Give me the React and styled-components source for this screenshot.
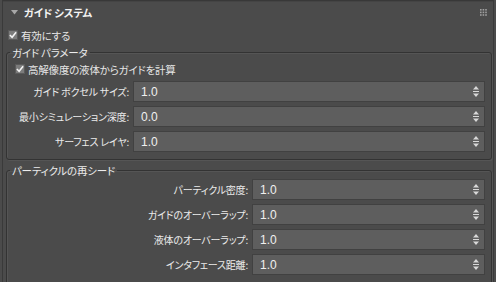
import React from "react";
import { styled, createGlobalStyle } from "styled-components";

const GlobalStyle = createGlobalStyle`
  html, body {
    margin: 0;
    padding: 0;
    background: #4b4b4b;
    overflow: hidden;
  }
  body {
    font-family: "Noto Sans CJK JP", "Liberation Sans", sans-serif;
    font-size: 10px;
    letter-spacing: -0.2px;
    color: #e6e6e6;
  }
`;

const StRollout = styled.div`
  width: 492px;
  height: 282px;
  margin-left: 2px;
  border-left: 1px solid #3a3a3a;
  border-right: 1px solid #3a3a3a;
  border-top: 1px solid #383838;
  box-sizing: border-box;
  overflow: hidden;
  font-feature-settings: "palt";
`;

const StHeader = styled.div`
  height: 21px;
  display: flex;
  align-items: center;
  padding-left: 8px;
  padding-right: 6px;
  border-top: 1px solid #444;
`;

const StTitle = styled.span`
  font-weight: bold;
  font-size: 10.5px;
  color: #f2f2f2;
  margin-left: 6px;
  flex: 1;
`;

const StCheckRow = styled.label`
  display: flex;
  align-items: center;
  gap: 3px;
  height: 14px;
  font-size: 10.5px;
  padding-left: ${(p) => p.$indent}px;
  margin: ${(p) => p.$margin};
`;

const StBox = styled.span`
  width: 10px;
  height: 10px;
  background: #7c7c7c;
  border: 1px solid #5a5a5a;
  box-sizing: border-box;
  display: flex;
  align-items: center;
  justify-content: center;
`;

const StGroup = styled.fieldset`
  margin: ${(p) => p.$margin};
  margin-left: 3px;
  margin-right: 0;
  width: 486px;
  box-sizing: border-box;
  padding: 0 6px ${(p) => p.$bottom}px 0;
  border: 1px solid #333;
  border-radius: 3px;
  box-shadow: inset 1px 1px 0 #555, 1px 1px 0 #555;
  min-width: 0;
`;

const StLegend = styled.legend`
  padding: 0 2px;
  margin-left: 3px;
  line-height: 13px;
  font-size: 10.5px;
  color: #ececec;
`;

const StRows = styled.div`
  display: grid;
  grid-template-columns: ${(p) => p.$labelWidth}px 1fr;
  column-gap: 4px;
  row-gap: 4px;
  margin-top: ${(p) => p.$top}px;
`;

const StLabel = styled.span`
  text-align: right;
  align-self: center;
  white-space: nowrap;
  color: #ececec;
`;

const StField = styled.div`
  height: 21px;
  box-sizing: border-box;
  background: #5e5e5e;
  border: 1px solid #414141;
  display: flex;
  align-items: center;
  padding: 0 5px 0 7px;
  font-family: "Liberation Sans", sans-serif;
  font-size: 12px;
  letter-spacing: 0;
  color: #f0f0f0;
`;

const StValue = styled.span`
  flex: 1;
`;

const Triangle = () => (
  <svg width="7" height="5" viewBox="0 0 7 5">
    <path d="M0 0H7L3.5 4.5Z" fill="#a8a8a8" />
  </svg>
);

const Grip = () => (
  <svg width="7" height="7" viewBox="0 0 7 7">
    {[0, 2.6, 5.2].map((y) =>
      [0, 2.6, 5.2].map((x) => (
        <rect key={`${x}-${y}`} x={x} y={y} width="1.6" height="1.6" fill="#a0a0a0" />
      ))
    )}
  </svg>
);

const Check = () => (
  <svg width="9" height="8" viewBox="0 0 9 8">
    <path d="M1 4L3.5 6.5L8 1" stroke="#f4f4f4" strokeWidth="1.8" fill="none" />
  </svg>
);

const Arrows = () => (
  <svg width="6" height="11" viewBox="0 0 6 11">
    <path d="M3 0L6 3.5H0Z" fill="#d8d8d8" />
    <rect x="0" y="5" width="6" height="1" fill="#d8d8d8" />
    <path d="M0 7.5H6L3 11Z" fill="#d8d8d8" />
  </svg>
);

const Spinner = ({ value }) => (
  <StField>
    <StValue>{value}</StValue>
    <Arrows />
  </StField>
);

const guideParams = [
  { label: "ガイド ボクセル サイズ:", value: "1.0" },
  { label: "最小シミュレーション深度:", value: "0.0" },
  { label: "サーフェス レイヤ:", value: "1.0" },
];

const reseedParams = [
  { label: "パーティクル密度:", value: "1.0" },
  { label: "ガイドのオーバーラップ:", value: "1.0" },
  { label: "液体のオーバーラップ:", value: "1.0" },
  { label: "インタフェース距離:", value: "1.0" },
];

export default function App() {
  return (
    <>
      <GlobalStyle />
      <StRollout>
        <StHeader>
          <Triangle />
          <StTitle>ガイド システム</StTitle>
          <Grip />
        </StHeader>
        <StCheckRow $indent={5} $margin="5px 0 0 0">
          <StBox>
            <Check />
          </StBox>
          有効にする
        </StCheckRow>

        <StGroup $margin="4px 0 0 0" $bottom={7}>
          <StLegend>ガイド パラメータ</StLegend>
          <StCheckRow $indent={8} $margin="3px 0 0 0">
            <StBox>
              <Check />
            </StBox>
            高解像度の液体からガイドを計算
          </StCheckRow>
          <StRows $labelWidth={122} $top={5}>
            {guideParams.map((p) => (
              <React.Fragment key={p.label}>
                <StLabel>{p.label}</StLabel>
                <Spinner value={p.value} />
              </React.Fragment>
            ))}
          </StRows>
        </StGroup>

        <StGroup $margin="4px 0 0 0" $bottom={30}>
          <StLegend>パーティクルの再シード</StLegend>
          <StRows $labelWidth={241} $top={2}>
            {reseedParams.map((p) => (
              <React.Fragment key={p.label}>
                <StLabel>{p.label}</StLabel>
                <Spinner value={p.value} />
              </React.Fragment>
            ))}
          </StRows>
        </StGroup>
      </StRollout>
    </>
  );
}
